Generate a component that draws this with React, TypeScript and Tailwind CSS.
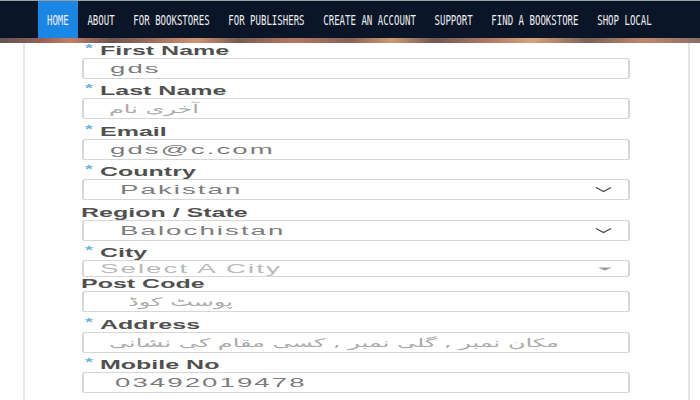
import React from "react";

type Field = {
  label: string;
  req: boolean;
  text: string;
  kind: "value" | "ph" | "urdu";
  control: "input" | "select" | "selectLight";
  pl: string;
  mt: string;
  lh: string;
  ih: string;
};

const fields: Field[] = [
  { label: "First Name", req: true, text: "gds", kind: "value", control: "input", pl: "pl-[26px]", mt: "mt-0", lh: "h-[15px]", ih: "h-[21px]" },
  { label: "Last Name", req: true, text: "آخری نام", kind: "urdu", control: "input", pl: "pl-[25px]", mt: "mt-[4px]", lh: "h-[15px]", ih: "h-[21px]" },
  { label: "Email", req: true, text: "gds@c.com", kind: "value", control: "input", pl: "pl-[26px]", mt: "mt-[5px]", lh: "h-[15px]", ih: "h-[21px]" },
  { label: "Country", req: true, text: "Pakistan", kind: "value", control: "select", pl: "pl-[36px]", mt: "mt-[4px]", lh: "h-[15px]", ih: "h-[21px]" },
  { label: "Region / State", req: false, text: "Balochistan", kind: "value", control: "select", pl: "pl-[36px]", mt: "mt-[5px]", lh: "h-[15px]", ih: "h-[21px]" },
  { label: "City", req: true, text: "Select A City", kind: "ph", control: "selectLight", pl: "pl-[16px]", mt: "mt-[4px]", lh: "h-[15px]", ih: "h-[17px]" },
  { label: "Post Code", req: false, text: "پوسٹ کوڈ", kind: "urdu", control: "input", pl: "pl-[44px]", mt: "mt-0", lh: "h-[14px]", ih: "h-[21px]" },
  { label: "Address", req: true, text: "مکان نمبر , گلی نمبر , کسی مقام کی نشانی", kind: "urdu", control: "input", pl: "pl-[25px]", mt: "mt-[5px]", lh: "h-[15px]", ih: "h-[21px]" },
  { label: "Mobile No", req: true, text: "03492019478", kind: "value", control: "input", pl: "pl-[31px]", mt: "mt-[4px]", lh: "h-[15px]", ih: "h-[21px]" },
];

const navItems = ["HOME", "ABOUT", "FOR BOOKSTORES", "FOR PUBLISHERS", "CREATE AN ACCOUNT", "SUPPORT", "FIND A BOOKSTORE", "SHOP LOCAL"];

function Chevron({ light }: { light: boolean }) {
  if (light) {
    return (
      <svg width="14" height="4" viewBox="0 0 14 4" className="mr-[16px]">
        <polygon points="0,0.5 14,0.5 7,3.5" fill="#9a9a9a" />
      </svg>
    );
  }
  return (
    <svg width="17" height="7" viewBox="0 0 17 7" className="mr-[16px]">
      <path d="M1 1.5 L8.5 5.5 L16 1.5" stroke="#4a4a4a" strokeWidth="1.4" fill="none" />
    </svg>
  );
}

function FormField({ f }: { f: Field }) {
  const textCls =
    f.kind === "value"
      ? "scale-x-[2.3] text-[12px] tracking-[0.9px] text-[#7c7c7c] font-['Liberation_Sans',Arial,sans-serif]"
      : f.kind === "ph"
      ? "scale-x-[2.3] text-[12px] tracking-[0.9px] text-[#b9b9b9] font-['Liberation_Sans',Arial,sans-serif]"
      : "scale-x-[2] text-[12px] text-[#ababab] font-['DejaVu_Sans','Noto_Sans',sans-serif]";
  return (
    <div className={`flex flex-col ${f.mt}`}>
      <div className={`relative flex items-center ${f.lh}`}>
        {f.req && (
          <span className="absolute left-[3px] top-[1px] inline-block origin-left scale-x-[2] text-[10px] leading-[10px] font-bold text-[#6cb0e2] font-['Liberation_Sans',Arial,sans-serif]">
            *
          </span>
        )}
        <span
          className={`inline-block origin-left scale-x-[2] whitespace-nowrap text-[12.5px] leading-[14px] font-bold text-[#505050] font-['Liberation_Sans',Arial,sans-serif] ${
            f.req ? "ml-[18px]" : "ml-[-1px]"
          }`}
        >
          {f.label}
        </span>
      </div>
      <div
        className={`flex items-center justify-between bg-white rounded-[3px] border-y border-x-2 border-[#d6d6d6] ${f.ih} ${f.pl}`}
      >
        <span className={`inline-block origin-left whitespace-nowrap leading-[14px] ${textCls}`}>
          {f.text}
        </span>
        {f.control !== "input" && <Chevron light={f.control === "selectLight"} />}
      </div>
    </div>
  );
}

export default function App() {
  return (
    <div className="w-[700px] h-[400px] overflow-hidden bg-white flex flex-col">
      <nav className="h-[38px] shrink-0 bg-[#0a1528] flex items-stretch pl-[37.6px] border-t border-[#9aa0a8]">
        {navItems.map((n, i) => (
          <div
            key={n}
            className={`flex items-center px-[9.35px] ${i === 0 ? "bg-[#1b86e3]" : ""}`}
          >
            <span className="inline-block scale-y-[1.6] whitespace-pre text-[9.06px] leading-[10px] text-[#f0f0f0] font-['DejaVu_Sans_Mono',monospace]">
              {n}
            </span>
          </div>
        ))}
      </nav>
      <div className="h-[5px] shrink-0 bg-[linear-gradient(90deg,#3a2a26_0%,#7a3a2a_6%,#b06040_10%,#4a2a22_16%,#8a4a36_22%,#c27a4e_28%,#5a3428_34%,#a0563a_42%,#6a3a2e_50%,#c08050_56%,#4e2e26_62%,#9a5a40_70%,#d08a58_76%,#5a3a30_84%,#b06a48_92%,#6a4a3e_100%)] opacity-80" />
      <div className="flex flex-1 min-h-0">
        <div className="w-[23px] shrink-0" />
        <div className="w-[667px] shrink-0 border-l-2 border-r-2 border-[#e4e4e4] flex justify-center">
          <div className="w-[548px] flex flex-col ml-[-2px]">
            {fields.map((f) => (
              <FormField key={f.label} f={f} />
            ))}
          </div>
        </div>
      </div>
    </div>
  );
}
